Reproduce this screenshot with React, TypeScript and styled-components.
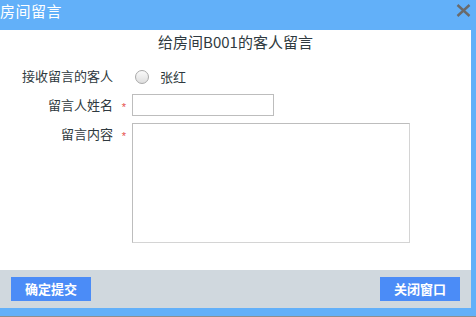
import React from 'react';
import styled, { createGlobalStyle } from 'styled-components';

const colors = {
  frame: '#62b0f9',
  footer: '#d0d8de',
  button: '#4b8cf7',
  text: '#2f3a40',
  border: '#bdbdbd',
  required: '#e5504a',
};

const font = '"Noto Sans CJK SC", "Noto Sans", "Liberation Sans", sans-serif';

const GlobalStyle = createGlobalStyle`
  html, body {
    margin: 0;
    padding: 0;
    background: #8e8e8e;
    font-family: ${font};
  }
`;

const App = () => {
  return (
    <>
      <GlobalStyle />
      <Window>
        <Header>
          <HeaderTitle>房间留言</HeaderTitle>
          <CloseButton aria-label="关闭">
            <svg width="15" height="13" viewBox="0 0 15 13">
              <path d="M1.5 1 L13.5 12 M13.5 1 L1.5 12" stroke="#6a6a6a" strokeWidth="2.4" />
            </svg>
          </CloseButton>
        </Header>
        <Inner>
          <Body>
            <Title>给房间B001的客人留言</Title>
            <Form>
              <Label>接收留言的客人</Label>
              <span />
              <RadioGroup>
                <Radio />
                <RadioText>张红</RadioText>
              </RadioGroup>

              <Label>留言人姓名</Label>
              <Star>*</Star>
              <NameInput type="text" />

              <Label $top>留言内容</Label>
              <Star>*</Star>
              <Content />
            </Form>
          </Body>
          <Footer>
            <Button>确定提交</Button>
            <Button>关闭窗口</Button>
          </Footer>
        </Inner>
      </Window>
    </>
  );
};

export default App;

const Window = styled.div`
  width: 476px;
  height: 316px;
  background: ${colors.frame};
  display: flex;
  flex-direction: column;
`;

const Header = styled.div`
  height: 30px;
  display: flex;
  align-items: center;
  justify-content: space-between;
  padding-right: 5px;
  flex-shrink: 0;
`;

const HeaderTitle = styled.div`
  color: #fff;
  font-size: 15px;
  line-height: 30px;
  margin-top: -8px;
  letter-spacing: 0.5px;
`;

const CloseButton = styled.div`
  display: flex;
  margin-top: -9px;
`;

const Inner = styled.div`
  width: 471px;
  display: flex;
  flex-direction: column;
`;

const Body = styled.div`
  background: #fff;
  height: 240px;
`;

const Title = styled.div`
  text-align: center;
  font-size: 15px;
  line-height: 24px;
  color: ${colors.text};
`;

const Form = styled.div`
  display: grid;
  grid-template-columns: 113px 19px auto;
  grid-template-rows: 22px 22px 120px;
  row-gap: 7px;
  margin-top: 11px;
  align-items: center;
`;

const Label = styled.div<{ $top?: boolean }>`
  text-align: right;
  font-size: 13px;
  line-height: 22px;
  color: ${colors.text};
  align-self: ${(p) => (p.$top ? 'start' : 'center')};
`;

const Star = styled.span`
  color: ${colors.required};
  font-family: "Liberation Sans", sans-serif;
  font-size: 11px;
  line-height: 20px;
  padding-top: 3px;
  text-align: center;
  padding-left: 3px;
  align-self: start;
`;

const RadioGroup = styled.div`
  display: flex;
  align-items: center;
  gap: 11px;
`;

const Radio = styled.span`
  display: block;
  width: 14px;
  height: 14px;
  margin-left: 3px;
  margin-top: 1px;
  border-radius: 50%;
  border: 1px solid #a9a9a9;
  box-sizing: border-box;
  background: linear-gradient(#fafafa, #dedede);
`;

const RadioText = styled.span`
  font-size: 13px;
  color: ${colors.text};
`;

const NameInput = styled.input`
  width: 142px;
  height: 22px;
  box-sizing: border-box;
  border: 1px solid ${colors.border};
  outline: none;
  padding: 0 4px;
  margin: 0;
`;

const Content = styled.textarea`
  width: 278px;
  height: 120px;
  box-sizing: border-box;
  border: 1px solid ${colors.border};
  border-right-color: #d4d4d4;
  border-bottom-color: #d4d4d4;
  outline: none;
  resize: none;
  margin: 0;
  align-self: start;
`;

const Footer = styled.div`
  height: 38px;
  background: ${colors.footer};
  display: flex;
  align-items: center;
  justify-content: space-between;
  padding: 0 11px;
`;

const Button = styled.div`
  width: 80px;
  height: 24px;
  background: ${colors.button};
  color: #fff;
  font-size: 13px;
  font-weight: bold;
  line-height: 24px;
  text-align: center;
`;
